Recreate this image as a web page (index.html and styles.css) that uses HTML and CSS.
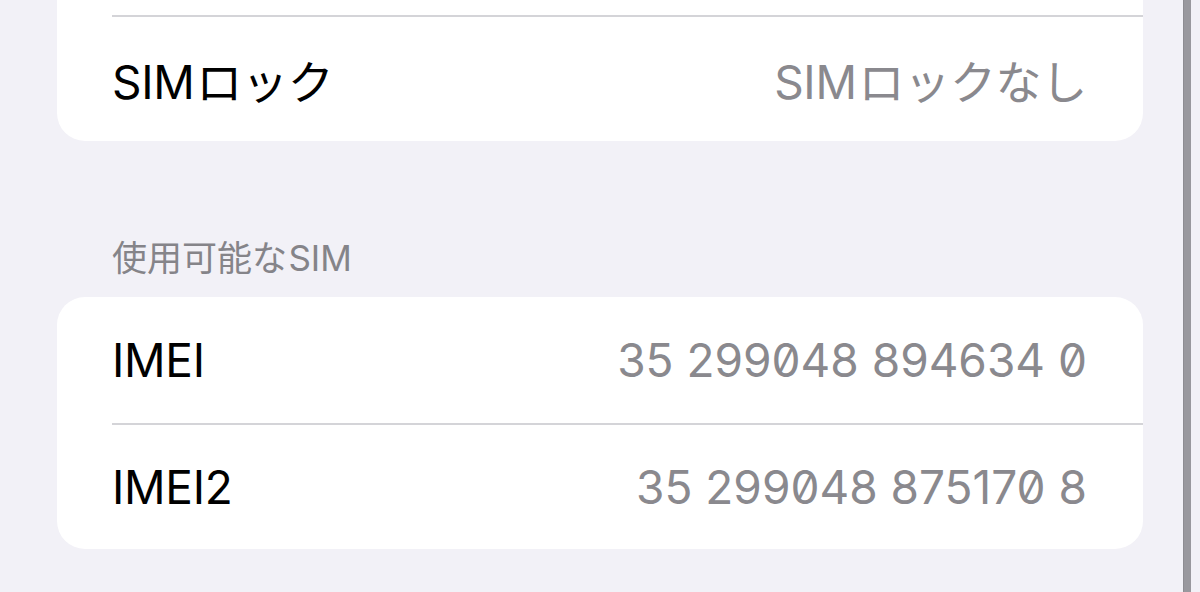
FILE: index.html
```html
<!DOCTYPE html>
<html lang="ja">
<head>
    <meta charset="UTF-8">
    <meta name="viewport" content="width=device-width, initial-scale=1.0">
    <title>情報</title>
    <link rel="stylesheet" href="styles.css">
</head>
<body>
    <div class="settings">
        <div class="group">
            <div class="row"></div>
            <div class="row">
                <span class="label"><span class="lat">SIM</span>ロック</span>
                <span class="value"><span class="lat">SIM</span>ロックなし</span>
            </div>
        </div>

        <div class="group-header">使用可能な<span class="lat-after">SIM</span></div>
        <div class="group">
            <div class="row">
                <span class="label">IMEI</span>
                <span class="value num">35 299048 894634 0</span>
            </div>
            <div class="row">
                <span class="label">IMEI2</span>
                <span class="value num">35 299048 875170 8</span>
            </div>
        </div>
    </div>

    <div class="edge-bar"></div>
</body>
</html>
```

FILE: styles.css
```css
body {
    margin: 0;
    height: 592px;
    background: #f2f1f7;
    font-family: "Inter", "Noto Sans CJK JP", sans-serif;
    overflow: hidden;
    display: flex;
    align-items: flex-start;
}
.settings {
    width: 1086px;
    margin: -111px 0 0 57px;
}
.group {
    background: #fff;
    border-radius: 28px;
    overflow: hidden;
}
.row {
    height: 126px;
    margin-left: 55px;
    padding-right: 56px;
    display: flex;
    align-items: center;
    justify-content: space-between;
    font-size: 46px;
    letter-spacing: -0.3px;
}
.row + .row {
    border-top: 2px solid #d4d4d8;
    height: 124px;
}
.label {
    color: #000;
}
.value {
    color: #8a898e;
}
.num {
    font-feature-settings: "zero" 1;
    letter-spacing: 0;
}
.lat {
    margin-right: 0.04em;
}
.lat-after {
    margin-left: 0.04em;
}
.group-header {
    font-size: 35px;
    color: #858489;
    padding: 89px 0 0 55px;
    height: 67px;
}
/* thin grey rail along the right edge */
.edge-bar {
    flex: none;
    width: 8px;
    height: 592px;
    margin-left: 40px;
    background: #99989e;
    border-left: 1px solid #8d8c92;
    box-sizing: border-box;
}
```
